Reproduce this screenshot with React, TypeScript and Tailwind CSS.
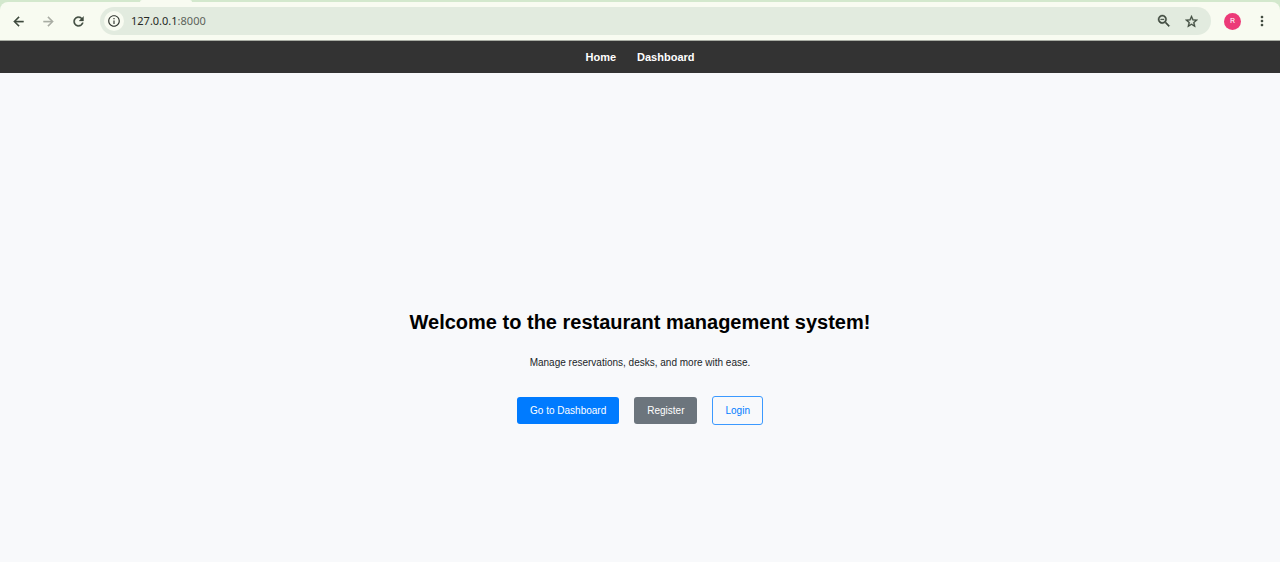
import type { ReactNode } from "react";
import {
  MdArrowBack,
  MdArrowForward,
  MdInfoOutline,
  MdMoreVert,
  MdRefresh,
  MdStarBorder,
  MdZoomOut,
} from "react-icons/md";

const boldIcon = "stroke-current stroke-[0.6] [&>path[fill=none]]:hidden";

function IconButton({ label, className = "", children }: { label: string; className?: string; children: ReactNode }) {
  return (
    <button type="button" aria-label={label} className={`flex items-center justify-center ${className}`}>
      {children}
    </button>
  );
}

function BrowserBar() {
  return (
    <div className="bg-[#d3e8cd]">
      <div className="flex h-0.5 pl-[140px]">
        <div className="w-[52px] rounded-t-sm bg-[#f8fbf1]" />
      </div>
      <div className="flex h-[39px] items-center rounded-t-lg border-b border-[#a9ada4] bg-[#f8fbf1] pl-2 text-[#3f4a3e]">
        <div className="flex gap-2.5">
          <IconButton label="Back" className="size-5">
            <MdArrowBack size={15} className={boldIcon} />
          </IconButton>
          <IconButton label="Forward" className="size-5 text-[#a9ada4]">
            <MdArrowForward size={15} className={boldIcon} />
          </IconButton>
          <IconButton label="Reload" className="size-5">
            <MdRefresh size={15} className={boldIcon} />
          </IconButton>
        </div>
        <div className="ml-3 flex h-7 flex-1 items-center rounded-full bg-[#e2ebdf] pr-3 pl-1">
          <IconButton label="Site information" className="size-5 rounded-full bg-[#f8fbf1] text-[#30352f]">
            <MdInfoOutline size={14} />
          </IconButton>
          <div
            aria-label="Address"
            className="ml-[7px] flex-1 font-['Noto_Sans','Open_Sans',sans-serif] text-[11px] leading-4 text-[#262a25]"
          >
            127.0.0.1<span className="text-[#5d635b]">:8000</span>
          </div>
          <div className="flex gap-[11px]">
            <IconButton label="Zoom" className="size-4">
              <MdZoomOut size={16} className={boldIcon} />
            </IconButton>
            <IconButton label="Bookmark this page" className="size-4">
              <MdStarBorder size={15} className={boldIcon} />
            </IconButton>
          </div>
        </div>
        <IconButton
          label="Profile"
          className="ml-[13px] size-[17px] rounded-full bg-[#ec3a78] font-['Roboto',sans-serif] text-[8px] text-white"
        >
          R
        </IconButton>
        <IconButton label="Menu" className="mr-2 ml-[11px] size-5">
          <MdMoreVert size={16} />
        </IconButton>
      </div>
    </div>
  );
}

export default function App() {
  return (
    <div className="flex min-h-screen flex-col bg-[#f8f9fb] font-['Liberation_Sans',Arial,sans-serif] text-black">
      <BrowserBar />
      <nav className="flex h-8 items-center justify-center gap-[21px] bg-[#333333] text-[11px] leading-4 font-bold text-white">
        <a href="#home">Home</a>
        <a href="#dashboard">Dashboard</a>
      </nav>
      <main className="flex flex-1 flex-col items-center px-4 pt-[237px] text-center">
        <h1 className="text-[20px] leading-6 font-bold">Welcome to the restaurant management system!</h1>
        <p className="mt-[21px] text-[10px] leading-4 text-[#212529]">Manage reservations, desks, and more with ease.</p>
        <div className="mt-[25px] flex items-center gap-[15px] text-[10px] leading-[15px]">
          <a href="#dashboard" className="rounded-[3px] bg-[#007bff] px-[13px] py-1.5 text-white">
            Go to Dashboard
          </a>
          <a href="#register" className="rounded-[3px] bg-[#6c757d] px-[13px] py-1.5 text-white">
            Register
          </a>
          <a href="#login" className="rounded-[3px] border border-[#3b99ff] px-3 py-1.5 text-[#007bff]">
            Login
          </a>
        </div>
      </main>
    </div>
  );
}
